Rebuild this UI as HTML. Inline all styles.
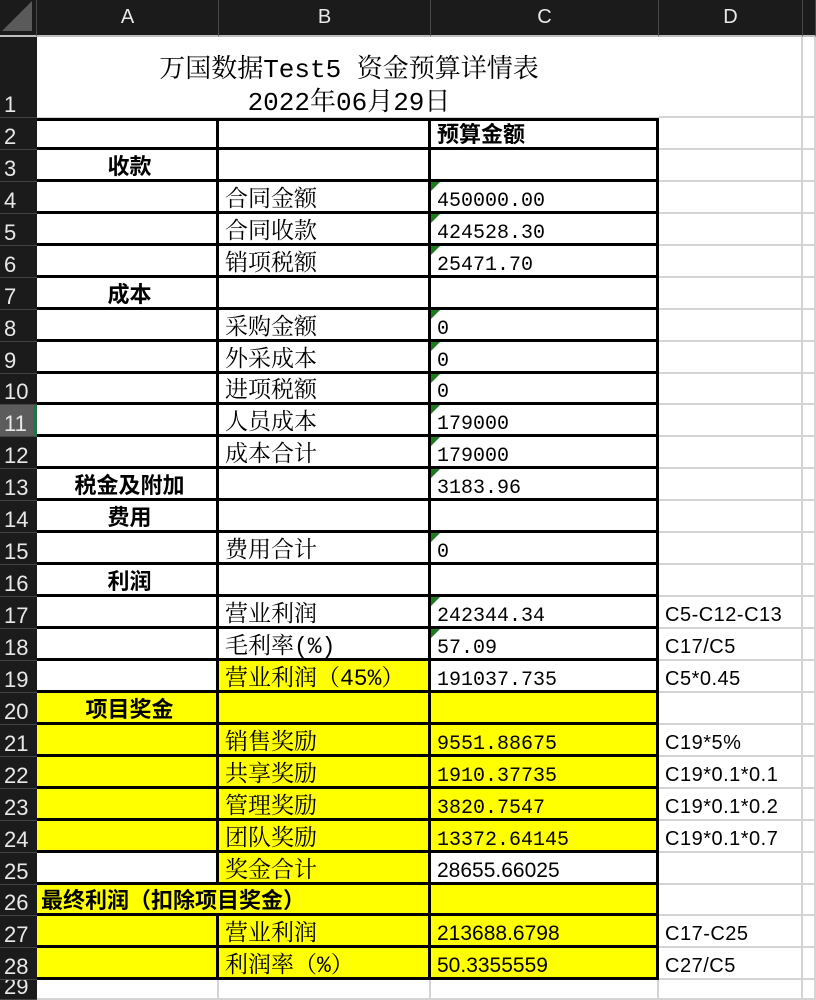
<!DOCTYPE html>
<html><head><meta charset="utf-8">
<style>
*{box-sizing:border-box;margin:0;padding:0}
html,body{width:816px;height:994px;overflow:hidden;background:#fff}
.g{position:absolute;left:0;top:0;display:grid;grid-template-columns:37px 182px 212px 228px 144px 13px;grid-template-rows:37px 81px repeat(27,31.95px) 20px;}
.g>div{overflow:hidden;white-space:nowrap;display:flex;align-items:flex-end;padding:0 0 0 6px;position:relative}
.g>div>span{position:relative}
.h{background:#1b1b1b;color:#e8e8e8;font:20px "Liberation Sans",sans-serif;justify-content:center;align-items:center!important;border-right:1px solid #4a4a4a;border-bottom:2px solid #bdbdbd;padding:0!important}
.corner{background:#1b1b1b;border-right:1px solid #4a4a4a;border-bottom:2px solid #bdbdbd}
.corner::after{content:"";position:absolute;right:4px;bottom:4px;border-left:30px solid transparent;border-bottom:30px solid #5a5a5a}
.rh{background:#1b1b1b;color:#e8e8e8;font:22px "Liberation Sans",sans-serif;padding:0 0 0 4px!important;border-bottom:1px solid #444;line-height:24px}
.rh.act{background:#5c5c5c;border-right:3px solid #217346}
.gr{border-right:2px solid #d4d4d4;border-bottom:2px solid #d4d4d4}
.b{border-right:3px solid #000;border-bottom:3px solid #000;font:23px "Liberation Mono","Noto Serif CJK SC",serif;line-height:21px}
.t{border-top:3px solid #000}
.y{background:#ffff00}
.bd{font:bold 22px "Liberation Sans","Noto Sans CJK SC",sans-serif!important;justify-content:center;line-height:22px}
.bd>span{top:2px}
.bl{justify-content:flex-start!important}
.m{font:20px "Liberation Mono","Noto Serif CJK SC",monospace!important;line-height:21px}
.m>span{top:2px}
.s{font:21px "Liberation Sans","Noto Sans CJK SC",sans-serif!important;line-height:22px}
.s>span{top:1px}
.d{font:20px "Liberation Sans",sans-serif;letter-spacing:0.5px;line-height:23px}
.tr::before{content:"";position:absolute;left:0;top:0;border-right:9px solid transparent;border-top:9px solid #1e7b1e}
.title{grid-column:2/5;flex-direction:column;align-items:center!important;justify-content:flex-end;font:26px "Liberation Mono","Noto Serif CJK SC",serif;line-height:33px;padding:0 0 0 2px!important;border-bottom:1px solid #d4d4d4}
.title span{top:3px}
.sp2{grid-column:2/4}
</style></head><body>
<div class="g">
<div class="corner"></div><div class="h">A</div><div class="h">B</div><div class="h">C</div><div class="h">D</div><div class="h"></div>

<div class="rh">1</div><div class="title"><span>万国数据Test5 资金预算详情表</span><span>2022年06月29日</span></div><div class="gr"></div><div class="gr"></div>

<div class="rh">2</div><div class="b t"></div><div class="b t"></div><div class="b t bd bl" style="padding-left:6px"><span>预算金额</span></div><div class="gr"></div><div class="gr"></div>
<div class="rh">3</div><div class="b bd"><span>收款</span></div><div class="b"></div><div class="b"></div><div class="gr"></div><div class="gr"></div>
<div class="rh">4</div><div class="b"></div><div class="b">合同金额</div><div class="b m tr"><span>450000.00</span></div><div class="gr"></div><div class="gr"></div>
<div class="rh">5</div><div class="b"></div><div class="b">合同收款</div><div class="b m tr"><span>424528.30</span></div><div class="gr"></div><div class="gr"></div>
<div class="rh">6</div><div class="b"></div><div class="b">销项税额</div><div class="b m tr"><span>25471.70</span></div><div class="gr"></div><div class="gr"></div>
<div class="rh">7</div><div class="b bd"><span>成本</span></div><div class="b"></div><div class="b"></div><div class="gr"></div><div class="gr"></div>
<div class="rh">8</div><div class="b"></div><div class="b">采购金额</div><div class="b m tr"><span>0</span></div><div class="gr"></div><div class="gr"></div>
<div class="rh">9</div><div class="b"></div><div class="b">外采成本</div><div class="b m tr"><span>0</span></div><div class="gr"></div><div class="gr"></div>
<div class="rh">10</div><div class="b"></div><div class="b">进项税额</div><div class="b m tr"><span>0</span></div><div class="gr"></div><div class="gr"></div>
<div class="rh act">11</div><div class="b"></div><div class="b">人员成本</div><div class="b m tr"><span>179000</span></div><div class="gr"></div><div class="gr"></div>
<div class="rh">12</div><div class="b"></div><div class="b">成本合计</div><div class="b m tr"><span>179000</span></div><div class="gr"></div><div class="gr"></div>
<div class="rh">13</div><div class="b bd"><span>税金及附加</span></div><div class="b"></div><div class="b m tr"><span>3183.96</span></div><div class="gr"></div><div class="gr"></div>
<div class="rh">14</div><div class="b bd"><span>费用</span></div><div class="b"></div><div class="b"></div><div class="gr"></div><div class="gr"></div>
<div class="rh">15</div><div class="b"></div><div class="b">费用合计</div><div class="b m tr"><span>0</span></div><div class="gr"></div><div class="gr"></div>
<div class="rh">16</div><div class="b bd"><span>利润</span></div><div class="b"></div><div class="b"></div><div class="gr"></div><div class="gr"></div>
<div class="rh">17</div><div class="b"></div><div class="b">营业利润</div><div class="b m tr"><span>242344.34</span></div><div class="gr d">C5-C12-C13</div><div class="gr"></div>
<div class="rh">18</div><div class="b"></div><div class="b">毛利率(%)</div><div class="b m tr"><span>57.09</span></div><div class="gr d">C17/C5</div><div class="gr"></div>
<div class="rh">19</div><div class="b"></div><div class="b y">营业利润（45%）</div><div class="b m"><span>191037.735</span></div><div class="gr d">C5*0.45</div><div class="gr"></div>
<div class="rh">20</div><div class="b y bd"><span>项目奖金</span></div><div class="b y"></div><div class="b y"></div><div class="gr"></div><div class="gr"></div>
<div class="rh">21</div><div class="b y"></div><div class="b y">销售奖励</div><div class="b y m"><span>9551.88675</span></div><div class="gr d">C19*5%</div><div class="gr"></div>
<div class="rh">22</div><div class="b y"></div><div class="b y">共享奖励</div><div class="b y m"><span>1910.37735</span></div><div class="gr d">C19*0.1*0.1</div><div class="gr"></div>
<div class="rh">23</div><div class="b y"></div><div class="b y">管理奖励</div><div class="b y m"><span>3820.7547</span></div><div class="gr d">C19*0.1*0.2</div><div class="gr"></div>
<div class="rh">24</div><div class="b y"></div><div class="b y">团队奖励</div><div class="b y m"><span>13372.64145</span></div><div class="gr d">C19*0.1*0.7</div><div class="gr"></div>
<div class="rh">25</div><div class="b"></div><div class="b y">奖金合计</div><div class="b s"><span>28655.66025</span></div><div class="gr"></div><div class="gr"></div>
<div class="rh">26</div><div class="b y bd bl sp2" style="padding-left:4px"><span>最终利润（扣除项目奖金）</span></div><div class="b y"></div><div class="gr"></div><div class="gr"></div>
<div class="rh">27</div><div class="b y"></div><div class="b y">营业利润</div><div class="b y s"><span>213688.6798</span></div><div class="gr d">C17-C25</div><div class="gr"></div>
<div class="rh">28</div><div class="b y"></div><div class="b y">利润率（%）</div><div class="b y s"><span>50.3355559</span></div><div class="gr d">C27/C5</div><div class="gr"></div>
<div class="rh">29</div><div class="gr"></div><div class="gr"></div><div class="gr"></div><div class="gr"></div><div class="gr"></div>
</div>
</body></html>
